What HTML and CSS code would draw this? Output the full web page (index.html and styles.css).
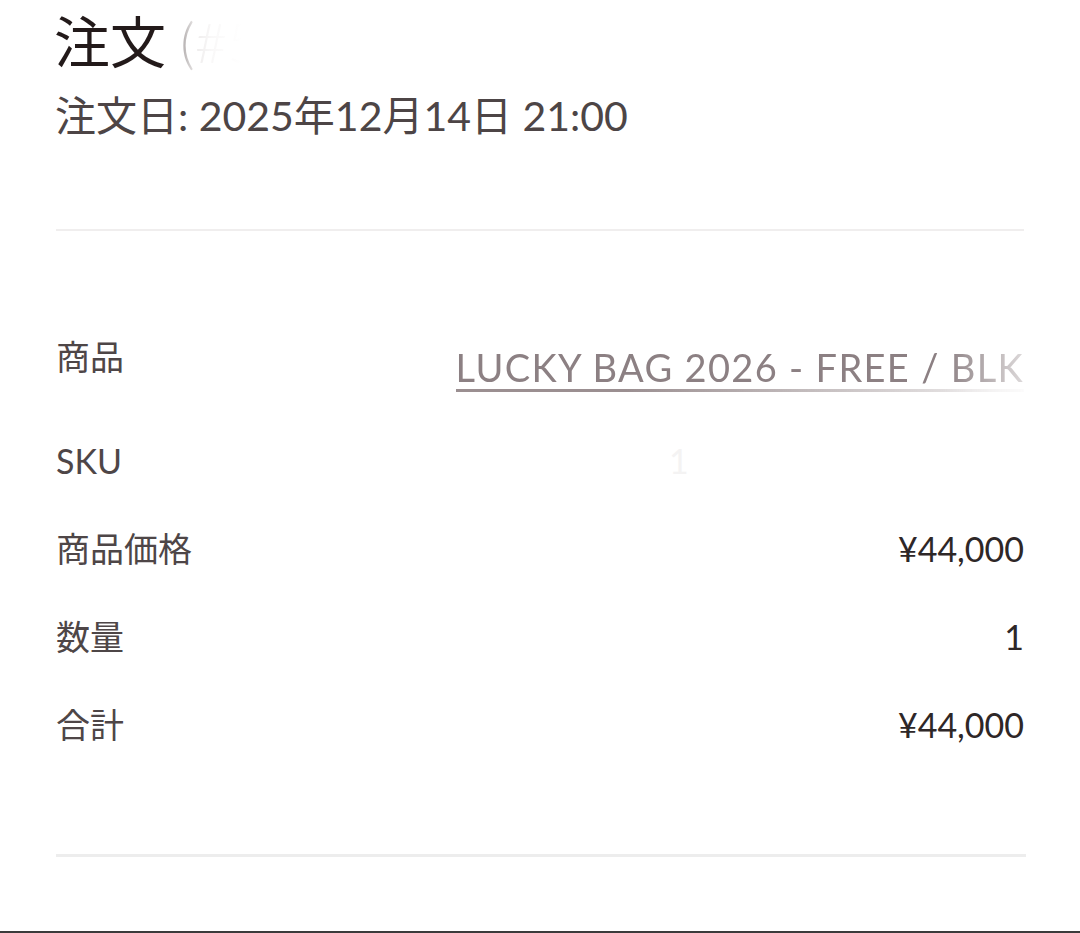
FILE: index.html
```html
<!DOCTYPE html>
<html lang="ja">
<head>
    <meta charset="UTF-8" />
    <meta name="viewport" content="width=device-width, initial-scale=1" />
    <title>注文</title>
    <link rel="stylesheet" href="styles.css">
</head>
<body>

    <div class="page">
        <!-- ヘッダー -->
        <div class="order-head">
            <h1>注文 <span class="order-no">(#5214</span></h1>
            <p class="order-date">注文日: 2025年12月14日 21:00</p>
        </div>

        <hr class="divider" />

        <!-- 明細 -->
        <div class="detail">
            <div class="row row-product">
                <span class="label">商品</span>
                <span class="product-name">LUCKY BAG 2026 - FREE / BLK</span>
            </div>
            <div class="row">
                <span class="label">SKU</span>
                <span class="sku">1<span class="masked">20260101004518273</span></span>
            </div>
            <div class="row">
                <span class="label">商品価格</span>
                <span class="value">¥44,000</span>
            </div>
            <div class="row">
                <span class="label">数量</span>
                <span class="value">1</span>
            </div>
            <div class="row">
                <span class="label">合計</span>
                <span class="value">¥44,000</span>
            </div>
        </div>

        <hr class="divider divider-bottom" />
    </div>

    <div class="bottom-edge"></div>

</body>
</html>
```

FILE: styles.css
```css
* {
    margin: 0;
    padding: 0;
    box-sizing: border-box;
}
html, body {
    height: 933px;
    overflow: hidden;
}
body {
    font-family: 'Lato', 'Noto Sans CJK JP', sans-serif;
    background: #ffffff;
    color: #2e2727;
    display: flex;
    flex-direction: column;
}
.page {
    flex: 1;
    padding: 0 56px;
}
/* Header */
.order-head {
    padding-top: 8px;
}
h1 {
    font-size: 56px;
    line-height: 68px;
    font-weight: 400;
    color: #231a1a;
    margin-left: -2px;
}
.order-no {
    background: linear-gradient(to right, #a9a4a4 0%, #eeecec 9%, #f9f8f8 18%, #ffffff 35%);
    -webkit-background-clip: text;
    background-clip: text;
    color: transparent;
    font-weight: 300;
}
.order-date {
    margin-top: 15px;
    font-size: 41px;
    line-height: 50px;
    color: #4d4546;
    margin-left: -1px;
}
.divider {
    border: none;
    height: 2px;
    background-color: #f0eeee;
    margin-top: 88px;
}
/* Detail rows */
.detail {
    margin-top: 82px;
}
.row {
    display: flex;
    justify-content: space-between;
    align-items: center;
    height: 88px;
    font-size: 34px;
    line-height: 1;
}
.row-product {
    height: 104px;
    align-items: flex-start;
}
.row-product .label {
    margin-top: 27px;
}
.label {
    color: #4e4647;
}
.value {
    color: #2e2727;
}
.product-name {
    margin-top: 35px;
    font-size: 38px;
    letter-spacing: 0.035em;
    color: #8c8083;
    padding-bottom: 6px;
    background: linear-gradient(to right, #9b8f91 0%, #9b8f91 30%, rgba(155, 143, 145, 0.12) 100%) left bottom / 100% 3px no-repeat;
    -webkit-mask-image: linear-gradient(to right, #000 86%, rgba(0, 0, 0, 0.3) 100%);
    mask-image: linear-gradient(to right, #000 86%, rgba(0, 0, 0, 0.3) 100%);
}
.sku {
    color: #f4f3f3;
}
.masked {
    color: transparent;
}
.divider-bottom {
    height: 3px;
    background-color: #ededed;
    margin-top: 85px;
    margin-right: -2px;
}
.bottom-edge {
    height: 2px;
    background-color: #3b3b3b;
}
```
